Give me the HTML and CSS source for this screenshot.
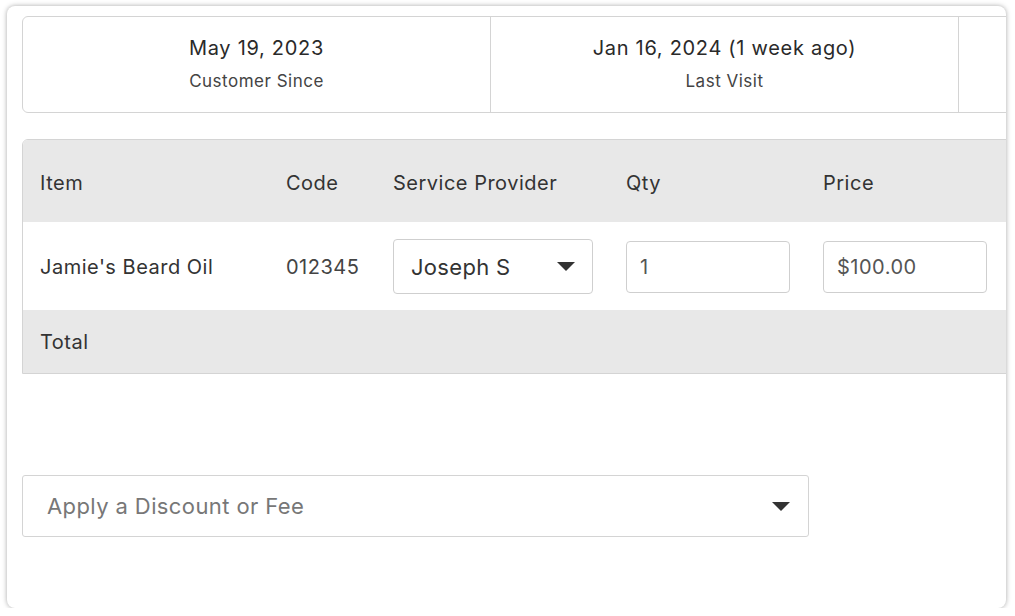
FILE: index.html
```html
<!DOCTYPE html>
<html>
<head>
<meta charset="utf-8">
<link rel="stylesheet" href="styles.css">
</head>
<body>
<div class="card">
  <div class="stats">
    <div class="stat"><div class="stat-value">May 19, 2023</div><div class="stat-label">Customer Since</div></div>
    <div class="stat"><div class="stat-value">Jan 16, 2024 (1 week ago)</div><div class="stat-label">Last Visit</div></div>
    <div class="stat"><div class="stat-value">&nbsp;</div><div class="stat-label">&nbsp;</div></div>
  </div>
  <div class="table">
    <div class="row head">
      <div class="c c1">Item</div>
      <div class="c c2">Code</div>
      <div class="c c3">Service Provider</div>
      <div class="c c4">Qty</div>
      <div class="c c5">Price</div>
    </div>
    <div class="row body">
      <div class="c c1">Jamie's Beard Oil</div>
      <div class="c c2 code">012345</div>
      <div class="c c3"><div class="select"><span>Joseph S</span><span class="caret"></span></div></div>
      <div class="c c4"><div class="input">1</div></div>
      <div class="c c5"><div class="input">$100.00</div></div>
    </div>
    <div class="row total">
      <div class="c c1">Total</div>
    </div>
  </div>
  <div class="discount"><span>Apply a Discount or Fee</span><span class="caret"></span></div>
</div>
</body>
</html>
```
FILE: styles.css
```css
html, body { margin: 0; padding: 0; background: #fff; }
body { font-family: Inter, "Open Sans", sans-serif; color: #333; }
.card {
  margin: 6px 9px 0 7px;
  width: 999px;
  height: 602px;
  box-sizing: border-box;
  border-radius: 8px;
  box-shadow: 0 0 5px rgba(0,0,0,0.35);
  overflow: hidden;
  padding: 10px 0 0 15px;
  background: #fff;
}
.stats {
  display: flex;
  width: 1404px;
  height: 97px;
  box-sizing: border-box;
  border: 1px solid #d4d4d4;
  border-radius: 6px;
}
.stat {
  width: 468px;
  flex: none;
  border-right: 1px solid #d4d4d4;
  display: flex;
  flex-direction: column;
  align-items: center;
  padding-top: 18px;
  box-sizing: border-box;
}
.stat-value { font-size: 20px; line-height: 26px; letter-spacing: 0.7px; color: #2a2a2a; }
.stat-label { font-size: 17px; line-height: 24px; letter-spacing: 0.5px; margin-top: 8px; color: #444; }
.table {
  margin-top: 26px;
  width: 1100px;
  border: 1px solid #d4d4d4;
  border-radius: 6px 0 0 0;
  overflow: hidden;
}
.row { display: flex; align-items: center; font-size: 20px; letter-spacing: 0.5px; }
.head { background: #e8e8e8; height: 82px; }
.body { background: #fff; height: 88px; }
.total { background: #e8e8e8; height: 63px; }
.c { padding-left: 17px; padding-top: 1px; box-sizing: border-box; flex: none; }
.c1 { width: 246px; }
.c2 { width: 107px; }
.c3 { width: 233px; }
.c4 { width: 197px; }
.c5 { width: 200px; }
.head .c { padding-top: 3px; }
.code { color: #444; }
.select {
  width: 200px; height: 55px; box-sizing: border-box;
  border: 1px solid #cfcfcf; border-radius: 4px;
  display: flex; align-items: center; justify-content: space-between;
  padding: 0 17px 0 17px;
  font-size: 22px; letter-spacing: 0.3px; color: #333;
}
.select span:first-child { padding-top: 1px; }
.caret {
  width: 0; height: 0;
  border-left: 9px solid transparent;
  border-right: 9px solid transparent;
  border-top: 9px solid #333;
}
.input {
  width: 164px; height: 52px; box-sizing: border-box;
  border: 1px solid #cfcfcf; border-radius: 4px;
  display: flex; align-items: center;
  padding-left: 13px;
  font-size: 20px; letter-spacing: 0.5px; color: #555;
}
.discount {
  margin-top: 101px;
  width: 787px; height: 62px; box-sizing: border-box;
  border: 1px solid #d4d4d4; border-radius: 3px;
  display: flex; align-items: center; justify-content: space-between;
  padding: 0 18px 0 24px;
  font-size: 22px; letter-spacing: 0.4px; color: #777;
}
.discount .caret { border-top-color: #333; }
```
